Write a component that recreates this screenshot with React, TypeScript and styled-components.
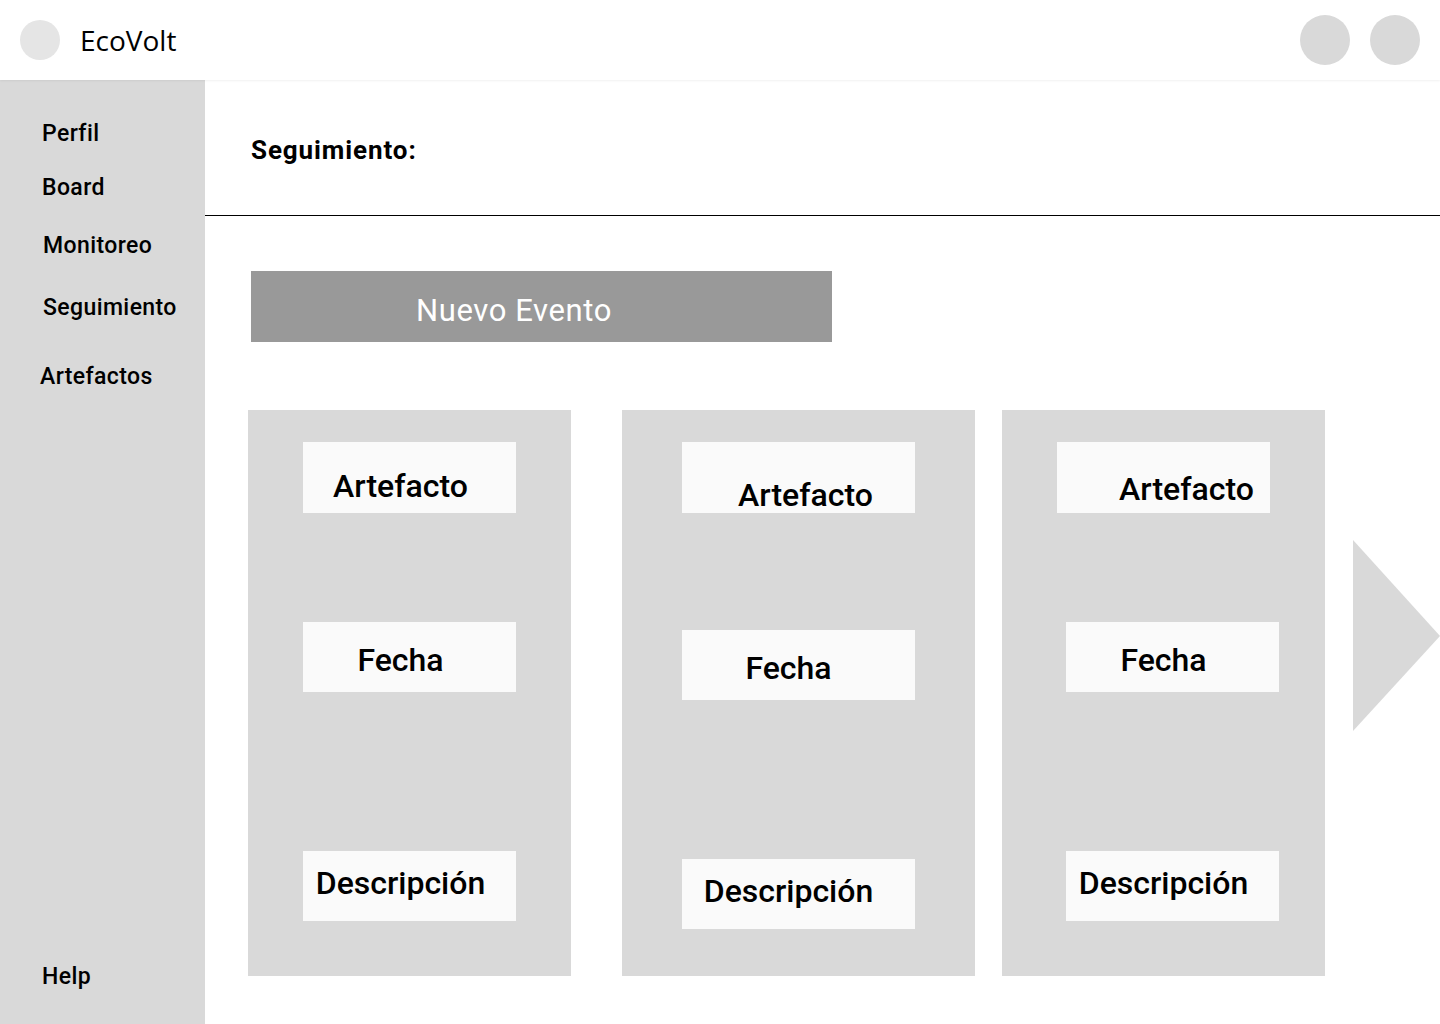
import React from "react";
import styled, { createGlobalStyle } from "styled-components";

const Global = createGlobalStyle`
  html, body { margin: 0; padding: 0; background: #ffffff; }
  body { font-family: Roboto, "Liberation Sans", sans-serif; color: #000; }
  * { box-sizing: border-box; }
`;

const Page = styled.div`
  width: 1440px;
  height: 1024px;
  display: flex;
  flex-direction: column;
  overflow: hidden;
`;

const TopBar = styled.header`
  height: 80px;
  flex: 0 0 80px;
  display: flex;
  align-items: center;
  padding: 0 20px;
  background: #fff;
  box-shadow: 0 1px 2px rgba(0, 0, 0, 0.06);
  position: relative;
  z-index: 1;
`;

const Logo = styled.div`
  width: 40px;
  height: 40px;
  border-radius: 50%;
  background: #e5e5e5;
`;

const Brand = styled.div`
  margin-left: 20px;
  font-family: "Open Sans", "Noto Sans", sans-serif;
  font-size: 28px;
  font-weight: 400;
  line-height: 1;
`;

const Actions = styled.div`
  margin-left: auto;
  display: flex;
  gap: 20px;
`;

const Avatar = styled.div`
  width: 50px;
  height: 50px;
  border-radius: 50%;
  background: #d9d9d9;
`;

const Body = styled.div`
  flex: 1;
  display: flex;
  min-height: 0;
`;

const Sidebar = styled.nav`
  width: 205px;
  flex: 0 0 205px;
  background: #d9d9d9;
  display: flex;
  flex-direction: column;
  padding: 41px 0 34px;
`;

const NavItem = styled.div<{ $top: number; $left: number }>`
  margin-top: ${(p) => p.$top}px;
  padding-left: ${(p) => p.$left}px;
  font-size: 23px;
  font-weight: 500;
  letter-spacing: 0.4px;
  line-height: 26px;
`;

const HelpItem = styled(NavItem)`
  margin-top: auto;
`;

const Main = styled.main`
  flex: 1;
  display: flex;
  flex-direction: column;
`;

const TitleBar = styled.div`
  height: 136px;
  padding: 55px 0 0 46px;
  border-bottom: 1px solid #000;
`;

const Title = styled.h1`
  margin: 0;
  font-size: 26px;
  font-weight: 700;
  letter-spacing: 0.9px;
  line-height: 30px;
`;

const NewButton = styled.button`
  margin: 55px 0 0 46px;
  width: 581px;
  height: 71px;
  border: none;
  background: #999999;
  color: #fff;
  font-family: Roboto, "Liberation Sans", sans-serif;
  font-size: 31px;
  font-weight: 400;
  letter-spacing: 0.6px;
  text-align: left;
  padding: 8px 0 0 165px;
  cursor: pointer;
`;

const Cards = styled.div`
  margin: 68px 0 0 43px;
  display: flex;
  align-items: flex-start;
`;

const Card = styled.section<{ $width: number; $gap: number }>`
  width: ${(p) => p.$width}px;
  height: 566px;
  margin-left: ${(p) => p.$gap}px;
  background: #d9d9d9;
  display: flex;
  flex-direction: column;
  align-items: flex-start;
  padding-top: 32px;
`;

const Field = styled.div<{
  $top: number;
  $left: number;
  $width: number;
  $height: number;
  $dx: number;
  $dy: number;
}>`
  margin-top: ${(p) => p.$top}px;
  margin-left: ${(p) => p.$left}px;
  width: ${(p) => p.$width}px;
  height: ${(p) => p.$height}px;
  background: #fafafa;
  display: flex;
  align-items: center;
  justify-content: center;
  font-size: 32px;
  font-weight: 500;
  line-height: 38px;
  white-space: nowrap;
  padding-left: ${(p) => (p.$dx > 0 ? p.$dx * 2 : 0)}px;
  padding-right: ${(p) => (p.$dx < 0 ? -p.$dx * 2 : 0)}px;
  padding-top: ${(p) => (p.$dy > 0 ? p.$dy * 2 : 0)}px;
  padding-bottom: ${(p) => (p.$dy < 0 ? -p.$dy * 2 : 0)}px;
`;

const NextArrow = styled.svg`
  margin: 130px 0 0 28px;
  flex: 0 0 auto;
`;

type FieldSpec = {
  label: string;
  top: number;
  left: number;
  width: number;
  height: number;
  dx: number;
  dy: number;
};

type CardSpec = { width: number; gap: number; fields: FieldSpec[] };

const cards: CardSpec[] = [
  {
    width: 323,
    gap: 0,
    fields: [
      { label: "Artefacto", top: 0, left: 55, width: 213, height: 71, dx: -9, dy: 8 },
      { label: "Fecha", top: 109, left: 55, width: 213, height: 70, dx: -9, dy: 3 },
      { label: "Descripción", top: 159, left: 55, width: 213, height: 70, dx: -9, dy: -3 },
    ],
  },
  {
    width: 353,
    gap: 51,
    fields: [
      { label: "Artefacto", top: 0, left: 60, width: 233, height: 71, dx: 7, dy: 17 },
      { label: "Fecha", top: 117, left: 60, width: 233, height: 70, dx: -10, dy: 3 },
      { label: "Descripción", top: 159, left: 60, width: 233, height: 70, dx: -10, dy: -3 },
    ],
  },
  {
    width: 323,
    gap: 27,
    fields: [
      { label: "Artefacto", top: 0, left: 55, width: 213, height: 71, dx: 23, dy: 11 },
      { label: "Fecha", top: 109, left: 64, width: 213, height: 70, dx: -9, dy: 3 },
      { label: "Descripción", top: 159, left: 64, width: 213, height: 70, dx: -9, dy: -3 },
    ],
  },
];

const navItems = [
  { label: "Perfil", top: 0, left: 42 },
  { label: "Board", top: 28, left: 42 },
  { label: "Monitoreo", top: 32, left: 43 },
  { label: "Seguimiento", top: 36, left: 43 },
  { label: "Artefactos", top: 43, left: 40 },
];

export default function App() {
  return (
    <Page>
      <Global />
      <TopBar>
        <Logo />
        <Brand>EcoVolt</Brand>
        <Actions>
          <Avatar />
          <Avatar />
        </Actions>
      </TopBar>
      <Body>
        <Sidebar>
          {navItems.map((n) => (
            <NavItem key={n.label} $top={n.top} $left={n.left}>
              {n.label}
            </NavItem>
          ))}
          <HelpItem $top={0} $left={42}>
            Help
          </HelpItem>
        </Sidebar>
        <Main>
          <TitleBar>
            <Title>Seguimiento:</Title>
          </TitleBar>
          <div>
            <NewButton>Nuevo Evento</NewButton>
          </div>
          <Cards>
            {cards.map((c, i) => (
              <Card key={i} $width={c.width} $gap={c.gap}>
                {c.fields.map((f) => (
                  <Field
                    key={f.label}
                    $top={f.top}
                    $left={f.left}
                    $width={f.width}
                    $height={f.height}
                    $dx={f.dx}
                    $dy={f.dy}
                  >
                    {f.label}
                  </Field>
                ))}
              </Card>
            ))}
            <NextArrow width="87" height="191" viewBox="0 0 87 191">
              <polygon points="0,0 87,96 0,191" fill="#d9d9d9" />
            </NextArrow>
          </Cards>
        </Main>
      </Body>
    </Page>
  );
}
